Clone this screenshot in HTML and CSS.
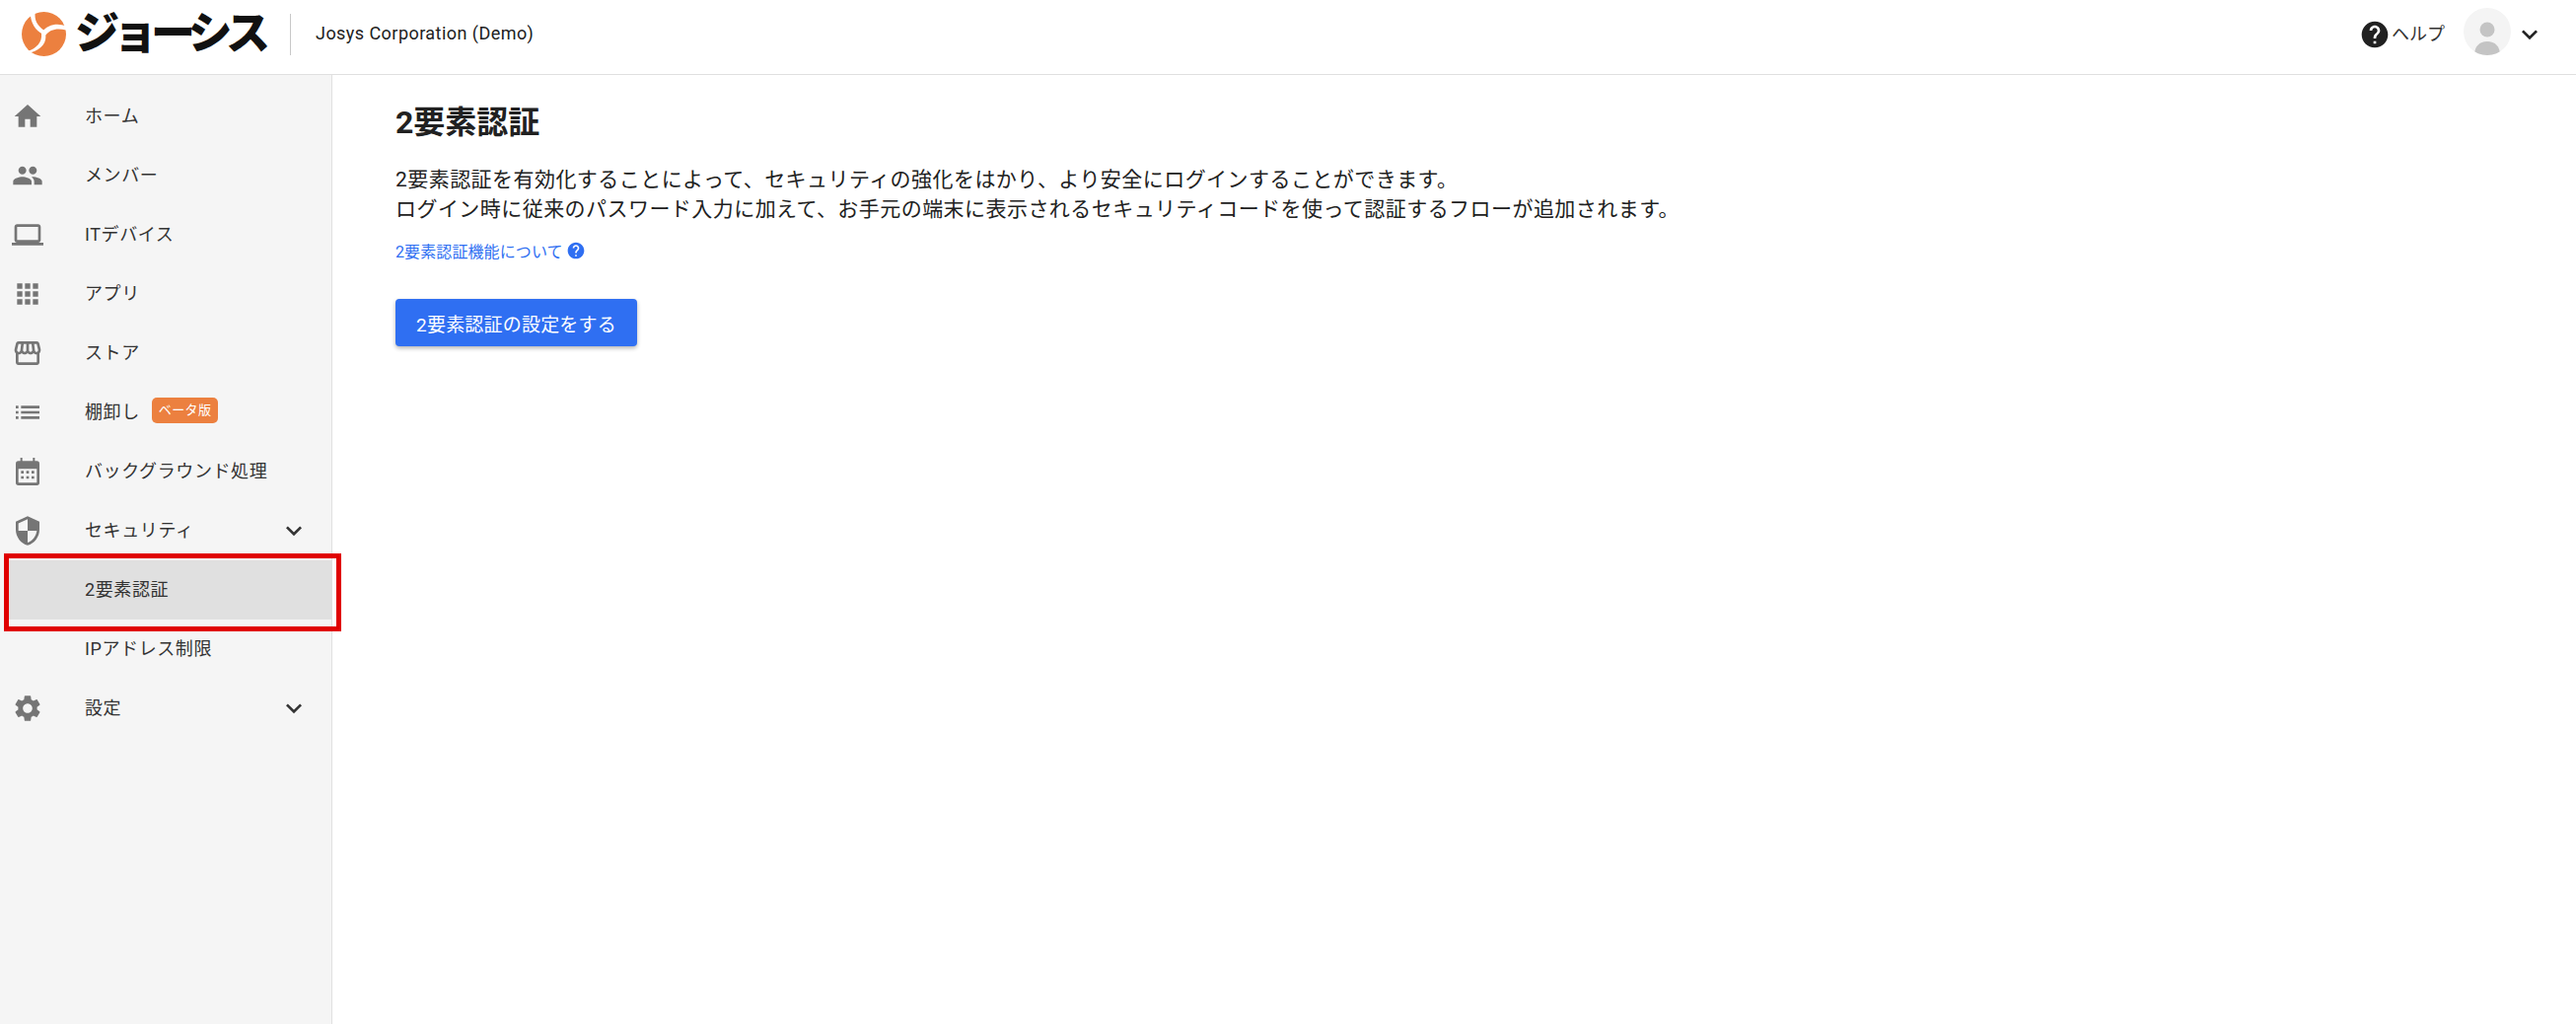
FILE: index.html
```html
<!DOCTYPE html>
<html lang="ja">
<head>
  <meta charset="UTF-8">
  <title>2要素認証</title>
  <link rel="stylesheet" href="styles.css">
</head>
<body>
  <header class="topbar">
    <div class="brand">
      <svg class="brand-mark" viewBox="0 0 45 45" width="45" height="45">
        <circle cx="22.500" cy="22.500" r="22.500" fill="#ec803f"/>
        <path fill="#fff" d="M9 -1h5C12 8 16 15 25 20l-3 3C13 19 8 9 9 -1z"/>
        <path fill="#fff" d="M20 21C27 12 37 11 47 15v4C37 16 29 17 24 24z"/>
        <path fill="#fff" d="M20 22l4 0C26 31 20 38 10 41l-4-1C15 37 21 31 20 22z"/>
      </svg>
      <span class="brand-name">ジョーシス</span>
    </div>
    <div class="company">Josys Corporation (Demo)</div>
    <div class="top-right">
      <a class="help">
        <svg viewBox="0 0 24 24" width="32" height="32"><path fill="#212121" d="M12 2C6.48 2 2 6.48 2 12s4.48 10 10 10 10-4.48 10-10S17.52 2 12 2zm1 17h-2v-2h2v2zm2.070-7.750l-.9.920C13.450 12.900 13 13.500 13 15h-2v-.5c0-1.100.450-2.100 1.170-2.830l1.240-1.260c.370-.360.590-.860.590-1.410 0-1.100-.9-2-2-2s-2 .9-2 2H8c0-2.210 1.790-4 4-4s4 1.790 4 4c0 .880-.360 1.680-.930 2.250z"/></svg>
        <span class="help-label">ヘルプ</span>
      </a>
      <div class="avatar">
        <svg viewBox="0 0 48 48" width="48" height="48">
          <circle cx="24" cy="22" r="7.500" fill="#c4c4c4"/>
          <path fill="#c4c4c4" d="M11 48c0-9 5-14 13-14s13 5 13 14z"/>
        </svg>
      </div>
      <svg class="chev" viewBox="0 0 24 24" width="32" height="32"><path fill="#212121" d="M7.410 8.590 12 13.170l4.590-4.580L18 10l-6 6-6-6z"/></svg>
    </div>
  </header>

  <div class="layout">
    <nav class="sidebar">
      <a class="nav-item">
        <svg class="nav-icon" viewBox="0 0 24 24"><path d="M10 20v-6h4v6h5v-8h3L12 3 2 12h3v8z"/></svg>
        <span>ホーム</span>
      </a>
      <a class="nav-item">
        <svg class="nav-icon" viewBox="0 0 24 24"><path d="M16 11c1.660 0 2.990-1.340 2.990-3S17.660 5 16 5c-1.660 0-3 1.340-3 3s1.340 3 3 3zm-8 0c1.660 0 2.990-1.340 2.990-3S9.660 5 8 5C6.340 5 5 6.340 5 8s1.340 3 3 3zm0 2c-2.330 0-7 1.170-7 3.500V19h14v-2.500c0-2.330-4.670-3.500-7-3.500zm8 0c-.29 0-.62.020-.97.050 1.160.840 1.970 1.970 1.970 3.450V19h6v-2.500c0-2.330-4.670-3.500-7-3.500z"/></svg>
        <span>メンバー</span>
      </a>
      <a class="nav-item">
        <svg class="nav-icon" viewBox="0 0 24 24"><path d="M20 18c1.100 0 1.990-.9 1.990-2L22 6c0-1.100-.9-2-2-2H4c-1.100 0-2 .9-2 2v10c0 1.100.9 2 2 2H0v2h24v-2h-4zM4 6h16v10H4V6z"/></svg>
        <span>ITデバイス</span>
      </a>
      <a class="nav-item">
        <svg class="nav-icon" viewBox="0 0 24 24"><path d="M4 8h4V4H4v4zm6 12h4v-4h-4v4zm-6 0h4v-4H4v4zm0-6h4v-4H4v4zm6 0h4v-4h-4v4zm6-10v4h4V4h-4zm-6 4h4V4h-4v4zm6 6h4v-4h-4v4zm0 6h4v-4h-4v4z"/></svg>
        <span>アプリ</span>
      </a>
      <a class="nav-item">
        <svg class="nav-icon" viewBox="0 0 24 24"><path d="M21.900 8.890l-1.050-4.370c-.22-.9-1-1.520-1.910-1.520H5.050c-.9 0-1.690.630-1.900 1.520L2.100 8.890c-.24 1.020-.020 2.060.620 2.880.080.110.190.190.280.290V19c0 1.100.9 2 2 2h14c1.100 0 2-.9 2-2v-6.940c.090-.090.200-.180.280-.280.640-.820.870-1.870.620-2.890zM18.910 4.990l1.050 4.370c.1.420.010.840-.25 1.170-.14.180-.44.470-.94.470-.61 0-1.140-.49-1.210-1.140L16.980 5l1.930-.010zM13 5h1.960l.54 4.520c.050.390-.070.780-.33 1.070-.22.260-.54.410-.95.410-.67 0-1.220-.59-1.220-1.310V5zM8.490 9.520L9.040 5H11v4.690c0 .720-.55 1.310-1.290 1.310-.34 0-.65-.15-.89-.41-.25-.29-.37-.68-.33-1.070zm-4.450-.16L5.050 5h1.970l-.58 4.860c-.08.650-.6 1.140-1.210 1.140-.49 0-.8-.29-.93-.47-.27-.32-.36-.75-.26-1.170zM5 19v-6.030c.080.010.150.030.230.030.870 0 1.660-.36 2.240-.95.6.6 1.400.95 2.310.95.870 0 1.650-.36 2.230-.93.590.570 1.390.93 2.290.93.840 0 1.640-.35 2.240-.95.580.59 1.370.95 2.240.95.080 0 .150-.020.230-.030V19H5z"/></svg>
        <span>ストア</span>
      </a>
      <a class="nav-item">
        <svg class="nav-icon" viewBox="0 0 24 24"><path d="M3 13h2v-2H3v2zm0 4h2v-2H3v2zm0-8h2V7H3v2zm4 4h14v-2H7v2zm0 4h14v-2H7v2zM7 7v2h14V7H7z"/></svg>
        <span>棚卸し</span>
        <span class="badge">ベータ版</span>
      </a>
      <a class="nav-item">
        <svg class="nav-icon" viewBox="0 1.500 24 24"><path fill-rule="evenodd" d="M6.500 3h1.500v2.500h8V3h1.500v2.500H19a2 2 0 0 1 2 2V22a2 2 0 0 1-2 2H5a2 2 0 0 1-2-2V7.500a2 2 0 0 1 2-2h1.500zM5 11.500V22h14V11.500zM7 13h2v2H7zm4 0h2v2h-2zm4 0h2v2h-2zM7 17h2v2H7zm4 0h2v2h-2zm4 0h2v2h-2z"/></svg>
        <span>バックグラウンド処理</span>
      </a>
      <a class="nav-item">
        <svg class="nav-icon" viewBox="0 0 24 24"><path fill-rule="evenodd" d="M12 1L3 5v6c0 5.550 3.840 10.740 9 12 5.160-1.260 9-6.450 9-12V5l-9-4zM12 3.190L5 6.300V12h7zM12 12h7c-.53 4.120-3.280 7.790-7 8.940z"/></svg>
        <span>セキュリティ</span>
        <svg class="nav-chev" viewBox="0 0 24 24"><path d="M7.410 8.590 12 13.170l4.590-4.580L18 10l-6 6-6-6z"/></svg>
      </a>
      <div class="nav-selected-wrap">
        <a class="nav-item sub selected"><span>2要素認証</span></a>
        <div class="annotation"></div>
      </div>
      <a class="nav-item sub"><span>IPアドレス制限</span></a>
      <a class="nav-item">
        <svg class="nav-icon" viewBox="0 0 24 24"><path d="M19.140 12.940c.040-.3.060-.61.060-.94 0-.32-.020-.64-.070-.94l2.030-1.580c.18-.14.230-.41.120-.61l-1.920-3.320c-.12-.22-.37-.29-.59-.22l-2.390.96c-.5-.38-1.030-.7-1.620-.94l-.36-2.540c-.040-.24-.240-.41-.480-.41h-3.840c-.240 0-.430.170-.470.410l-.36 2.540c-.590.240-1.130.570-1.620.940l-2.390-.96c-.220-.080-.470 0-.590.220L2.740 8.870c-.120.210-.080.470.120.610l2.030 1.580c-.050.300-.090.630-.090.940s.020.640.070.940l-2.030 1.580c-.180.140-.230.410-.120.610l1.920 3.320c.120.220.370.290.590.220l2.390-.96c.500.380 1.030.700 1.620.940l.36 2.540c.050.240.240.410.480.410h3.840c.240 0 .440-.170.470-.410l.36-2.540c.590-.240 1.130-.560 1.620-.940l2.390.96c.220.080.470 0 .590-.220l1.920-3.320c.120-.220.070-.470-.120-.610l-2.010-1.580zM12 15.600c-1.980 0-3.600-1.620-3.600-3.600s1.620-3.600 3.600-3.600 3.600 1.620 3.600 3.600-1.620 3.600-3.600 3.600z"/></svg>
        <span>設定</span>
        <svg class="nav-chev" viewBox="0 0 24 24"><path d="M7.410 8.590 12 13.170l4.590-4.580L18 10l-6 6-6-6z"/></svg>
      </a>
    </nav>

    <main class="content">
      <h1 class="title">2要素認証</h1>
      <p class="lead">2要素認証を有効化することによって、セキュリティの強化をはかり、より安全にログインすることができます。<br>ログイン時に従来のパスワード入力に加えて、お手元の端末に表示されるセキュリティコードを使って認証するフローが追加されます。</p>
      <a class="doc-link">
        <span>2要素認証機能について</span>
        <svg viewBox="0 0 24 24" width="20" height="20"><path fill="#2f6ff2" d="M12 2C6.480 2 2 6.480 2 12s4.480 10 10 10 10-4.480 10-10S17.520 2 12 2zm1 17h-2v-2h2v2zm2.070-7.750l-.9.920C13.450 12.900 13 13.500 13 15h-2v-.5c0-1.100.450-2.100 1.170-2.830l1.240-1.260c.370-.360.590-.860.590-1.410 0-1.100-.9-2-2-2s-2 .9-2 2H8c0-2.210 1.790-4 4-4s4 1.790 4 4c0 .880-.360 1.680-.930 2.250z"/></svg>
      </a>
      <button class="primary-btn">2要素認証の設定をする</button>
    </main>
  </div>
</body>
</html>
```

FILE: styles.css
```css
* {
  box-sizing: border-box;
}

body {
  margin: 0;
  height: 100vh;
  overflow: hidden;
  background: #fff;
  color: #212121;
  font-family: Roboto, "Noto Sans CJK JP", sans-serif;
  display: flex;
  flex-direction: column;
}

.topbar {
  height: 76px;
  flex-shrink: 0;
  display: flex;
  align-items: center;
  padding: 0 31px 0 22px;
  border-bottom: 1px solid #e0e0e0;
}

.brand {
  display: flex;
  align-items: center;
  gap: 9px;
  width: 273px;
  height: 42px;
  margin-top: -6px;
  border-right: 1px solid #c8c8c8;
}

.brand-mark {
  flex-shrink: 0;
}

.brand-name {
  font-size: 45px;
  font-weight: 900;
  letter-spacing: -6.500px;
  color: #111;
  line-height: 42px;
  white-space: nowrap;
}

.company {
  margin-left: 25px;
  font-size: 18px;
  letter-spacing: 0.45px;
  margin-top: -8px;
}

.top-right {
  margin-left: auto;
  margin-top: -11px;
  display: flex;
  align-items: center;
}

.help {
  display: flex;
  align-items: center;
  font-size: 18px;
  gap: 1px;
  color: #333;
  margin-top: 6px;
}

.help-label {
  margin-top: -4px;
}

.avatar {
  margin-left: 19px;
  width: 48px;
  height: 48px;
  border-radius: 50%;
  background: #f4f4f4;
  overflow: hidden;
}

.avatar svg {
  display: block;
}

.chev {
  margin-left: 3px;
  margin-top: 6px;
}

.layout {
  flex: 1;
  display: flex;
  min-height: 0;
}

.sidebar {
  width: 337px;
  flex-shrink: 0;
  background: #f5f5f5;
  border-right: 1px solid #e0e0e0;
  padding-top: 10px;
}

.nav-item {
  height: 60px;
  display: flex;
  align-items: center;
  padding-left: 12px;
  font-size: 18px;
  letter-spacing: 0.6px;
  color: #333;
}

.nav-item.sub {
  padding-left: 86px;
}

.nav-item.selected {
  background: #e0e0e0;
  margin: 2px 0 -2px 8px;
  padding-left: 78px;
  padding-bottom: 4px;
}

.nav-icon {
  width: 32px;
  height: 32px;
  fill: #757575;
  margin-top: 4px;
  margin-right: 42px;
  flex-shrink: 0;
}

.nav-chev {
  width: 32px;
  height: 32px;
  fill: #333;
  margin-top: 3px;
  margin-left: auto;
  margin-right: 22px;
}

.badge {
  margin-left: 12px;
  padding: 0 7px;
  height: 26px;
  line-height: 26px;
  border-radius: 5px;
  background: #ec803f;
  color: #fff;
  font-size: 13px;
  letter-spacing: 0.4px;
}

.nav-selected-wrap {
  position: relative;
}

.annotation {
  position: absolute;
  left: 4px;
  top: -7px;
  width: 342px;
  height: 79px;
  border: 5px solid #e00000;
  z-index: 1;
}

.content {
  flex: 1;
  padding: 28px 64px;
}

.title {
  margin: 0;
  font-size: 32px;
  line-height: 40px;
  font-weight: 700;
}

.lead {
  margin: 23px 0 0;
  font-size: 21px;
  line-height: 30px;
  letter-spacing: 0.45px;
}

.doc-link {
  margin-top: 15px;
  display: flex;
  align-items: center;
  gap: 3px;
  font-size: 16px;
  letter-spacing: 0.1px;
  color: #2f6ff2;
}

.primary-btn {
  margin-top: 37px;
  display: block;
  width: 245px;
  height: 48px;
  border: none;
  border-radius: 4px;
  background: #2f6ff2;
  color: #fff;
  font-family: inherit;
  font-size: 19px;
  letter-spacing: 0.2px;
  box-shadow: 0 2px 4px rgba(0, 0, 0, 0.3);
}
```
